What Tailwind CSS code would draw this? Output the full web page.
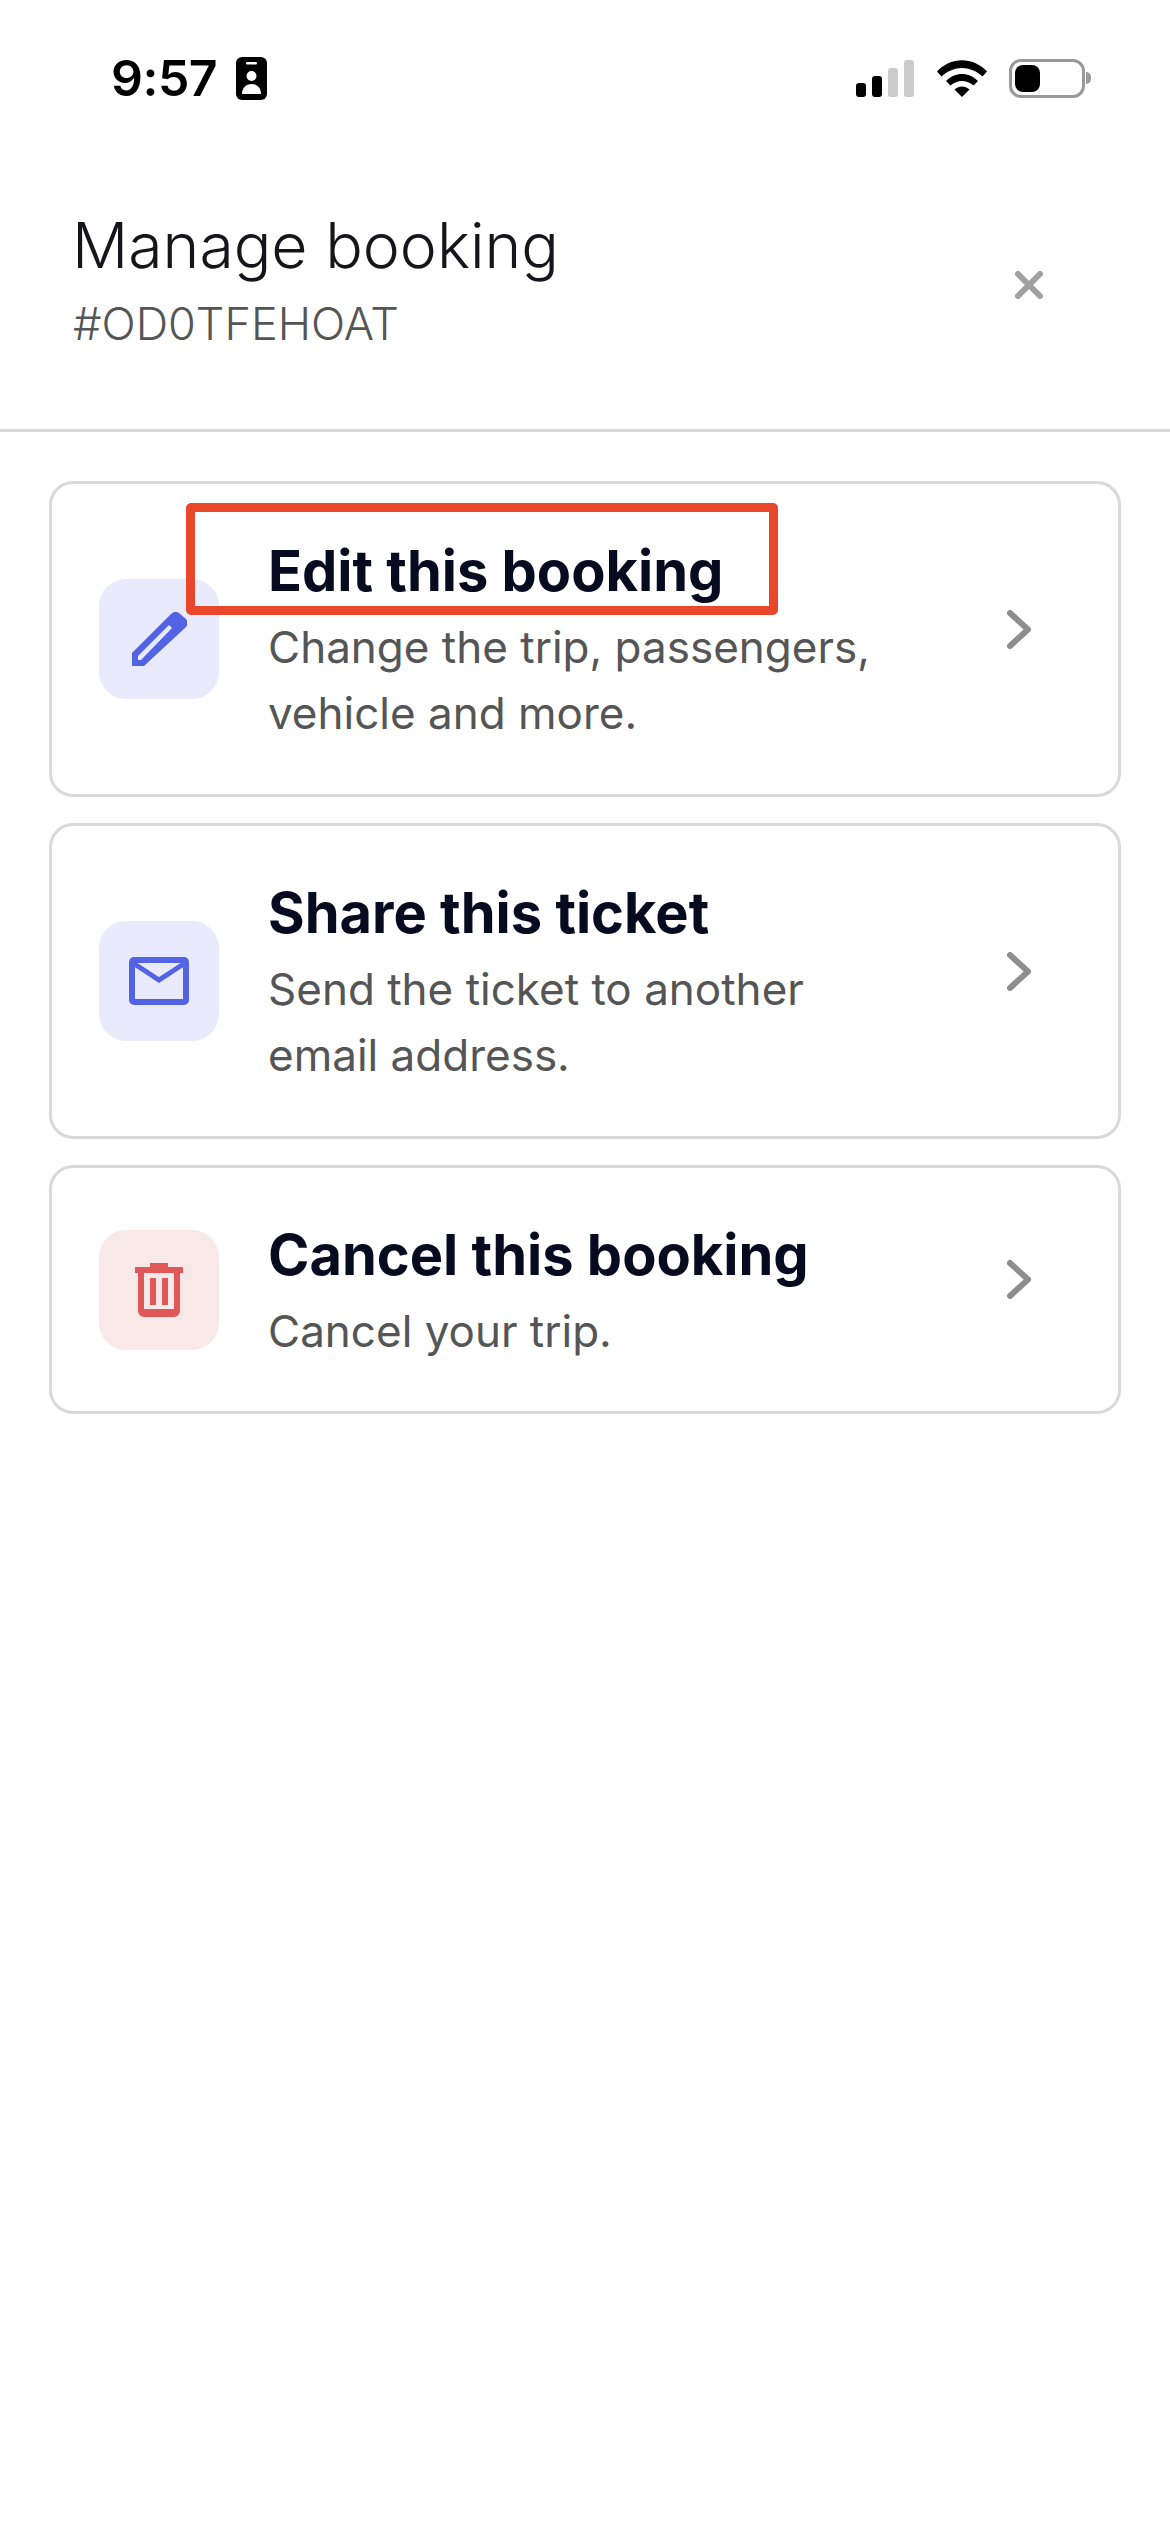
<!DOCTYPE html>
<html lang="en">
<head>
    <meta charset="UTF-8">
    <meta name="viewport" content="width=device-width, initial-scale=1.0">
    <title>Manage booking</title>
    <script src="https://cdn.jsdelivr.net/npm/@tailwindcss/browser@4"></script>
</head>
<body class="bg-white min-h-screen font-['Inter',sans-serif]">
    <!-- Status bar -->
    <div class="flex items-center justify-between h-[156px] pl-[111px] pr-[79px]">
        <div class="flex items-center gap-[19px]">
            <span class="text-[50px] leading-none font-semibold tracking-[-0.5px] text-black">9:57</span>
            <svg width="31" height="43" viewBox="0 0 31 43">
                <rect width="31" height="43" rx="6" fill="#000"/>
                <rect x="10" y="5" width="11" height="2.5" rx="1.2" fill="#fff"/>
                <circle cx="15.5" cy="19" r="5" fill="#fff"/>
                <path d="M6 37c0-6 4-10 9.500-10S25 31 25 37z" fill="#fff"/>
            </svg>
        </div>
        <div class="flex items-center">
            <div class="flex items-end gap-[6px] h-[37px]">
                <div class="w-[10px] h-[14px] rounded-[3px] bg-black"></div>
                <div class="w-[10px] h-[21px] rounded-[3px] bg-black"></div>
                <div class="w-[10px] h-[29px] rounded-[3px] bg-[#cccccc]"></div>
                <div class="w-[10px] h-[37px] rounded-[3px] bg-[#cccccc]"></div>
            </div>
            <svg class="ml-[23px]" width="50" height="37" viewBox="0 0 50 37">
                <path d="M0 11.500C14-3.500 36-3.500 50 11.500L45.500 16.500C33 5 17 5 4.500 16.500z" fill="#000"/>
                <path d="M9 21C18 11.500 32 11.500 41 21L36.500 25.500C29.500 19.500 20.500 19.500 13.500 25.500z" fill="#000"/>
                <path d="M17.500 29.500C22 25.500 28 25.500 32.500 29.500L25 37z" fill="#000"/>
            </svg>
            <div class="ml-[22px] flex items-center">
                <div class="w-[76px] h-[39px] rounded-[12px] border-[3px] border-[#999999] p-[3px]">
                    <div class="w-[25px] h-full rounded-[8px] bg-black"></div>
                </div>
                <div class="w-[5px] h-[12px] ml-[1px] rounded-r-full bg-[#999999]"></div>
            </div>
        </div>
    </div>

    <!-- Header -->
    <div class="flex items-start justify-between h-[276px] border-b-[3px] border-[#d9d9d9] pl-[72px] pr-[127px] pt-[51px]">
        <div>
            <h1 class="text-[62.5px] leading-[76px] font-light text-[#15151a]">Manage booking</h1>
            <p class="mt-[14px] ml-[1px] text-[45px] leading-[54px] font-light text-[#555555]">#OD0TFEHOAT</p>
        </div>
        <svg class="mt-[64px]" width="28" height="28" viewBox="0 0 28 28" fill="none" stroke="#a0a0a0" stroke-width="6" stroke-linecap="round">
            <path d="M3 3l22 22M25 3L3 25"/>
        </svg>
    </div>

    <!-- Options -->
    <div class="flex flex-col gap-[26px] pt-[49px] px-[49px]">
        <div class="flex items-center h-[316px] rounded-[24px] border-[3px] border-[#d9d9d9] pl-[47px] pr-[86px]">
            <div class="flex items-center justify-center shrink-0 w-[120px] h-[120px] rounded-[27px] bg-[#e9eafb]">
                <svg width="55" height="54" viewBox="0 0 55 54">
                    <path d="M0 41L39 2a6 6 0 0 1 8-1l7 6a6 6 0 0 1 0 8L12 54H0z" fill="#5264e3"/>
                    <path d="M6 44L37 13l3 3L9 48H6z" fill="#e9eafb"/>
                </svg>
            </div>
            <div class="ml-[49px] flex-1 mt-[4px]">
                <div class="text-[56px] leading-[70px] font-bold text-[#060b1f]">Edit this booking</div>
                <div class="mt-[8px] text-[44px] leading-[66px] text-[#555555]">Change the trip, passengers,<br>vehicle and more.</div>
            </div>
            <svg class="-mt-[20px]" width="25" height="39" viewBox="0 0 25 39" fill="none" stroke="#8e8e8e" stroke-width="6" stroke-linecap="round" stroke-linejoin="round">
                <path d="M3 3l18 16.500L3 36"/>
            </svg>
        </div>

        <div class="flex items-center h-[316px] rounded-[24px] border-[3px] border-[#d9d9d9] pl-[47px] pr-[86px]">
            <div class="flex items-center justify-center shrink-0 w-[120px] h-[120px] rounded-[27px] bg-[#e9eafb]">
                <svg width="60" height="48" viewBox="0 0 60 48" fill="none" stroke="#5264e3">
                    <rect x="3" y="3" width="54" height="42" rx="2" stroke-width="6"/>
                    <path d="M4 6l26 17L56 6" stroke-width="5"/>
                </svg>
            </div>
            <div class="ml-[49px] flex-1 mt-[4px]">
                <div class="text-[56px] leading-[70px] font-bold text-[#060b1f]">Share this ticket</div>
                <div class="mt-[8px] text-[44px] leading-[66px] text-[#555555]">Send the ticket to another<br>email address.</div>
            </div>
            <svg class="-mt-[20px]" width="25" height="39" viewBox="0 0 25 39" fill="none" stroke="#8e8e8e" stroke-width="6" stroke-linecap="round" stroke-linejoin="round">
                <path d="M3 3l18 16.500L3 36"/>
            </svg>
        </div>

        <div class="flex items-center h-[249px] rounded-[24px] border-[3px] border-[#d9d9d9] pl-[47px] pr-[86px]">
            <div class="flex items-center justify-center shrink-0 w-[120px] h-[120px] rounded-[27px] bg-[#f9e8e8]">
                <svg width="48" height="54" viewBox="0 0 48 54" fill="#e05858">
                    <path d="M15 0h18v4h15v6H0V4h15z"/>
                    <path d="M3 10h6v36h30V10h6v38a6 6 0 0 1-6 6H9a6 6 0 0 1-6-6z"/>
                    <rect x="15" y="15" width="6" height="27"/>
                    <rect x="27" y="15" width="6" height="27"/>
                </svg>
            </div>
            <div class="ml-[49px] flex-1 mt-[4px]">
                <div class="text-[56px] leading-[70px] font-bold text-[#060b1f]">Cancel this booking</div>
                <div class="mt-[8px] text-[44px] leading-[66px] text-[#555555]">Cancel your trip.</div>
            </div>
            <svg class="-mt-[20px]" width="25" height="39" viewBox="0 0 25 39" fill="none" stroke="#8e8e8e" stroke-width="6" stroke-linecap="round" stroke-linejoin="round">
                <path d="M3 3l18 16.500L3 36"/>
            </svg>
        </div>
    </div>

    <!-- Red annotation box drawn over the first card -->
    <div class="absolute left-[186px] top-[503px] w-[592px] h-[112px] rounded-[5px] border-[9px] border-[#e9472a]"></div>
</body>
</html>
